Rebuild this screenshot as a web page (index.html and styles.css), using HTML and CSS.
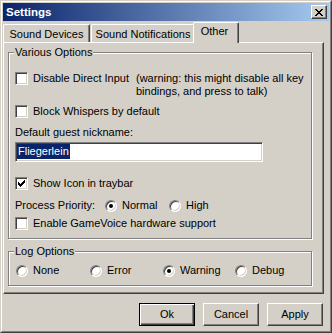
FILE: index.html
```html
<!DOCTYPE html>
<html lang="en">
<head>
  <meta charset="UTF-8">
  <meta name="viewport" content="width=device-width, initial-scale=1.0">
  <title>Settings</title>
  <link rel="stylesheet" href="styles.css">
</head>
<body>
  <div class="window">
    <div class="window_frame">
      <div class="titlebar">
        <span class="title">Settings</span>
        <a class="title_btn" href="javascript:;">
          <svg width="8" height="7" viewBox="0 0 8 7" shape-rendering="crispEdges"><path d="M0 0h2v1H0z M6 0h2v1H6z M1 1h2v1H1z M5 1h2v1H5z M2 2h4v1H2z M3 3h2v1H3z M2 4h4v1H2z M1 5h2v1H1z M5 5h2v1H5z M0 6h2v1H0z M6 6h2v1H6z"/></svg>
        </a>
      </div>
      <div class="client">
        <div class="tabs">
          <a class="tab tab_devices" href="javascript:;">Sound Devices</a>
          <a class="tab tab_notify" href="javascript:;">Sound Notifications</a>
          <a class="tab tab_active" href="javascript:;">Other</a>
        </div>
        <div class="tab_panel">
          <div class="group group_various">
            <div class="group_title">Various Options</div>
            <div class="row row_direct">
              <span class="checkbox"></span>
              <span class="label label_direct">Disable Direct Input</span>
              <span class="note">(warning: this might disable all key<br>bindings, and press to talk)</span>
            </div>
            <div class="row row_whispers">
              <span class="checkbox"></span>
              <span class="label">Block Whispers by default</span>
            </div>
            <div class="field_label">Default guest nickname:</div>
            <div class="textbox"><span class="selected">Fliegerlein</span></div>
            <div class="row row_tray">
              <span class="checkbox checked">
                <svg width="7" height="7" viewBox="0 0 7 7" shape-rendering="crispEdges"><path d="M0 2h1v3H0z M1 3h1v3H1z M2 4h1v3H2z M3 3h1v3H3z M4 2h1v3H4z M5 1h1v3H5z M6 0h1v3H6z"/></svg>
              </span>
              <span class="label">Show Icon in traybar</span>
            </div>
            <div class="row row_priority">
              <span class="label priority_label">Process Priority:</span>
              <span class="radio_item prio_item"><span class="radio on"></span>Normal</span>
              <span class="radio_item prio_item"><span class="radio"></span>High</span>
            </div>
            <div class="row row_gamevoice">
              <span class="checkbox"></span>
              <span class="label">Enable GameVoice hardware support</span>
            </div>
          </div>
          <div class="group group_log">
            <div class="group_title">Log Options</div>
            <div class="log_row">
              <span class="radio_item"><span class="radio"></span>None</span>
              <span class="radio_item"><span class="radio"></span>Error</span>
              <span class="radio_item"><span class="radio on"></span>Warning</span>
              <span class="radio_item"><span class="radio"></span>Debug</span>
            </div>
          </div>
        </div>
        <div class="buttons">
          <a class="btn btn_default" href="javascript:;">Ok</a>
          <a class="btn" href="javascript:;">Cancel</a>
          <a class="btn" href="javascript:;">Apply</a>
        </div>
      </div>
    </div>
  </div>
</body>
</html>
```

FILE: styles.css
```css
/* classic dialog look */
body {
  margin: 0;
  background-color: #d4d0c8;
  font-family: "Liberation Sans", Arial, sans-serif;
  font-size: 11px;
  color: #000;
}
a {
  color: #000;
  text-decoration: none;
}
.window {
  width: 332px;
  height: 333px;
  box-sizing: border-box;
  border: 1px solid;
  border-color: #d4d0c8 #404040 #404040 #d4d0c8;
  background-color: #d4d0c8;
}
.window_frame {
  height: 100%;
  box-sizing: border-box;
  border: 1px solid;
  border-color: #fff #808080 #808080 #fff;
  padding: 1px;
}
.titlebar {
  height: 18px;
  display: flex;
  align-items: center;
  justify-content: space-between;
  padding: 0 2px 0 3px;
  background: linear-gradient(to right, #0a246a, #a6caf0);
}
.title {
  color: #fff;
  font-weight: bold;
  font-size: 11.5px;
  line-height: 18px;
}
.title_btn {
  width: 16px;
  height: 14px;
  box-sizing: border-box;
  display: flex;
  align-items: center;
  justify-content: center;
  background-color: #d4d0c8;
  border: 1px solid;
  border-color: #fff #404040 #404040 #fff;
  box-shadow: inset -1px -1px #808080;
}
.client {
  padding: 1px 5px 0 0;
}

/* tabs */
.tabs {
  display: flex;
  align-items: flex-end;
  height: 20px;
}
.tab {
  box-sizing: border-box;
  height: 18px;
  padding: 3px 0 1px;
  line-height: 13px;
  text-align: center;
  border: 1px solid;
  border-bottom: 0;
  border-color: #fff #404040 transparent #fff;
  box-shadow: inset -1px 0 #808080;
  border-radius: 2px 2px 0 0;
}
.tab_devices {
  width: 87px;
  margin-right: 1px;
}
.tab_notify {
  width: 104px;
}
.tab_active {
  width: 46px;
  height: 21px;
  padding: 2px 3px 4px 0;
  margin: 0 -2px -1px;
  position: relative;
  z-index: 1;
  background-color: #d4d0c8;
}
.tab_panel {
  height: 252px;
  box-sizing: border-box;
  border: 1px solid;
  border-color: #fff #404040 #404040 #fff;
  box-shadow: inset -1px -1px #808080;
  padding: 9px 0 0 4px;
}

/* group boxes */
.group {
  width: 304px;
  box-sizing: border-box;
  border: 1px solid #808080;
  box-shadow: inset 1px 1px #fff, 1px 1px #fff;
  padding: 0 0 8px 6px;
}
.group_log {
  margin-top: 12px;
}
.group_title {
  width: fit-content;
  margin: -7px 0 0 -1px;
  padding: 0 1px;
  line-height: 13px;
  background-color: #d4d0c8;
}
.row {
  display: flex;
  align-items: flex-start;
  line-height: 13px;
}
.row_direct {
  margin-top: 13px;
}
.row_whispers {
  margin-top: 7px;
}
.row_tray {
  margin-top: 15px;
}
.row_priority {
  margin-top: 9px;
}
.row_gamevoice {
  margin-top: 5px;
}
.label_direct {
  width: 103px;
}
.field_label {
  margin-top: 8px;
  line-height: 13px;
}
.textbox {
  width: 248px;
  height: 20px;
  margin-top: 3px;
  box-sizing: border-box;
  padding: 1px 0 0 1px;
  border: 1px solid;
  border-color: #808080 #fff #fff #808080;
  box-shadow: inset 1px 1px #404040, inset -1px -1px #d4d0c8;
  background-color: #fff;
}
.selected {
  display: inline-block;
  vertical-align: top;
  height: 15px;
  line-height: 14px;
  padding: 0 1px;
  background-color: #0a246a;
  color: #fff;
}

/* checkbox and radio */
.checkbox {
  flex: none;
  width: 13px;
  height: 13px;
  box-sizing: border-box;
  padding: 2px;
  margin-right: 5px;
  border: 1px solid;
  border-color: #808080 #fff #fff #808080;
  box-shadow: inset 1px 1px #404040, inset -1px -1px #d4d0c8;
  background-color: #fff;
}
.checkbox svg {
  display: block;
}
.priority_label {
  width: 89px;
}
.radio_item {
  display: flex;
  align-items: center;
  line-height: 13px;
}
.prio_item {
  width: 64px;
}
.radio {
  flex: none;
  width: 12px;
  height: 12px;
  box-sizing: border-box;
  margin: 0 5px 0 1px;
  display: flex;
  align-items: center;
  justify-content: center;
  border: 1px solid;
  border-color: #808080 #fff #fff #808080;
  border-radius: 50%;
  box-shadow: inset 1px 1px #404040, inset -1px -1px #d4d0c8;
  background-color: #fff;
}
.radio.on::after {
  content: '';
  width: 4px;
  height: 4px;
  border-radius: 50%;
  background-color: #000;
}
.log_row {
  display: grid;
  grid-template-columns: 74px 73px 72px auto;
  margin-top: 6px;
}

/* buttons */
.buttons {
  display: flex;
  justify-content: flex-end;
  gap: 8px;
  margin-top: 9px;
  padding-right: 1px;
}
.btn {
  width: 56px;
  height: 23px;
  box-sizing: border-box;
  padding-bottom: 1px;
  line-height: 20px;
  text-align: center;
  border: 1px solid;
  border-color: #fff #404040 #404040 #fff;
  box-shadow: inset -1px -1px #808080;
}
.btn_default {
  border-color: #000;
  box-shadow: inset 1px 1px #fff, inset -1px -1px #404040, inset -2px -2px #808080;
}
```
